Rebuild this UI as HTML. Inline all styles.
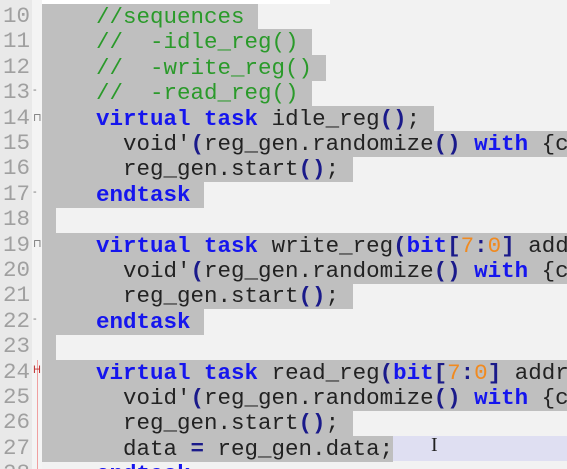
<!DOCTYPE html>
<html><head><style>
html,body{margin:0;width:567px;height:469px;overflow:hidden;}
#w{position:relative;width:567px;height:469px;overflow:hidden;background:#f2f2f2;font-family:"Liberation Mono",monospace;}
.g{position:absolute;left:0;top:0;width:32px;height:469px;background:#e9e9e9;}
.m{position:absolute;left:32px;top:0;width:10px;height:469px;background:#f4f4f4;}
.ln{position:absolute;left:-6px;width:36px;text-align:right;font-size:22.5px;color:#a0a0a0;height:25.4px;line-height:25.4px;}
.l{position:absolute;left:42px;width:525px;overflow:hidden;height:26px;line-height:26px;font-size:22.5px;white-space:pre;color:#222;}
.s{background:#bfbfbf;display:inline-block;height:26px;vertical-align:top;}
.c{color:#2a9a2a}.k{color:#1515ee;font-weight:bold}.p{color:#1a1a8a;font-weight:bold}.n{color:#f08a20}
.cur{position:absolute;left:42px;width:525px;height:25.4px;background:#dfdff2;}
.fm{position:absolute;left:33px;font-size:11px;color:#777;font-family:"Liberation Sans",sans-serif;}
</style></head><body><div id="w">
<div class="g"></div><div class="m"></div>
<div style="position:absolute;left:37px;top:360px;width:1px;height:109px;background:#f0a0a0"></div>
<div style="position:absolute;left:42px;top:0;width:288px;height:4px;background:#fff"></div>
<div class="cur" style="top:436px"></div>
<div class="ln" style="top:4px">10</div><div class="ln" style="top:29.4px">11</div><div class="ln" style="top:54.8px">12</div><div class="ln" style="top:80.2px">13</div><div class="ln" style="top:105.6px">14</div><div class="ln" style="top:131px">15</div><div class="ln" style="top:156.4px">16</div><div class="ln" style="top:181.8px">17</div><div class="ln" style="top:207.2px">18</div><div class="ln" style="top:232.6px">19</div><div class="ln" style="top:258px">20</div><div class="ln" style="top:283.4px">21</div><div class="ln" style="top:308.8px">22</div><div class="ln" style="top:334.2px">23</div><div class="ln" style="top:359.6px">24</div><div class="ln" style="top:385px">25</div><div class="ln" style="top:410.4px">26</div><div class="ln" style="top:435.8px">27</div><div class="ln" style="top:461.2px">28</div>
<div class="fm" style="top:84px">-</div><div class="fm" style="top:111px">⊓</div><div class="fm" style="top:186px">-</div><div class="fm" style="top:237px">⊓</div><div class="fm" style="top:313px">-</div><div class="fm" style="top:364px;color:#c03030">H</div>
<div class="l" style="top:4px"><span class="s">    <span class="c">//sequences</span> </span></div>
<div class="l" style="top:29.4px"><span class="s">    <span class="c">//  -idle_reg()</span> </span></div>
<div class="l" style="top:54.8px"><span class="s">    <span class="c">//  -write_reg()</span> </span></div>
<div class="l" style="top:80.2px"><span class="s">    <span class="c">//  -read_reg()</span> </span></div>
<div class="l" style="top:105.6px"><span class="s">    <span class="k">virtual</span> <span class="k">task</span> idle_reg<span class="p">()</span>; </span></div>
<div class="l" style="top:131px"><span class="s">      void'<span class="p">(</span>reg_gen.randomize<span class="p">()</span> <span class="k">with</span> {c           </span></div>
<div class="l" style="top:156.4px"><span class="s">      reg_gen.start<span class="p">()</span>; </span></div>
<div class="l" style="top:181.8px"><span class="s">    <span class="k">endtask</span> </span></div>
<div class="l" style="top:207.2px"><span class="s"> </span></div>
<div class="l" style="top:232.6px"><span class="s">    <span class="k">virtual</span> <span class="k">task</span> write_reg<span class="p">(</span><span class="k">bit</span><span class="p">[</span><span class="n">7</span><span class="p">:</span><span class="n">0</span><span class="p">]</span> addr     </span></div>
<div class="l" style="top:258px"><span class="s">      void'<span class="p">(</span>reg_gen.randomize<span class="p">()</span> <span class="k">with</span> {c           </span></div>
<div class="l" style="top:283.4px"><span class="s">      reg_gen.start<span class="p">()</span>; </span></div>
<div class="l" style="top:308.8px"><span class="s">    <span class="k">endtask</span> </span></div>
<div class="l" style="top:334.2px"><span class="s"> </span></div>
<div class="l" style="top:359.6px"><span class="s">    <span class="k">virtual</span> <span class="k">task</span> read_reg<span class="p">(</span><span class="k">bit</span><span class="p">[</span><span class="n">7</span><span class="p">:</span><span class="n">0</span><span class="p">]</span> addr     </span></div>
<div class="l" style="top:385px"><span class="s">      void'<span class="p">(</span>reg_gen.randomize<span class="p">()</span> <span class="k">with</span> {c           </span></div>
<div class="l" style="top:410.4px"><span class="s">      reg_gen.start<span class="p">()</span>; </span></div>
<div class="l" style="top:435.8px"><span class="s">      data <span class="p">=</span> reg_gen.data;</span></div>
<div class="l" style="top:461.2px">    <span class="k">endtask</span></div>
<div style="position:absolute;left:431px;top:434px;font-size:20px;color:#222;font-family:'Liberation Serif',serif">I</div>
</div></body></html>
